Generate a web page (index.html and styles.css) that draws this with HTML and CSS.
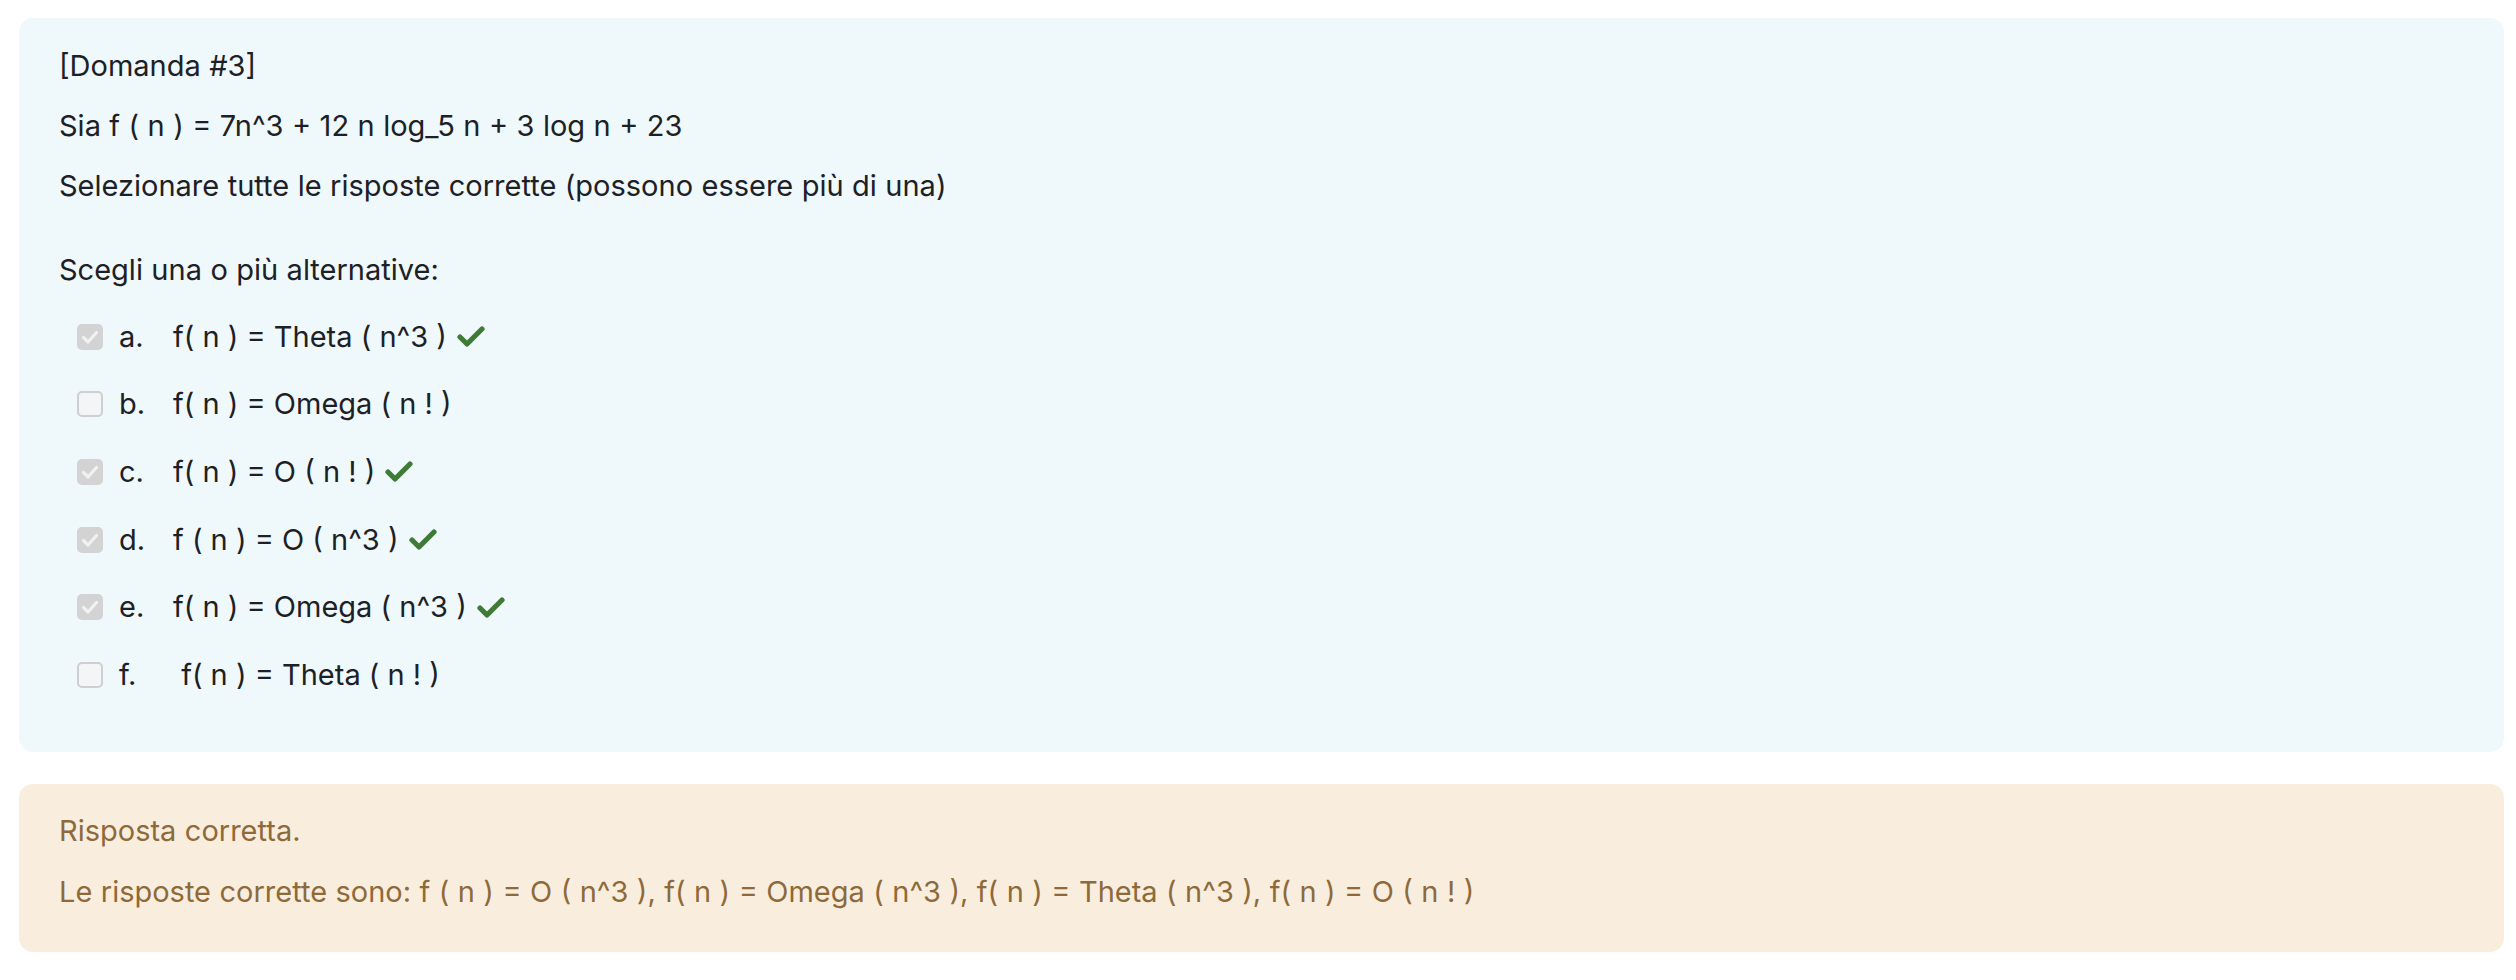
FILE: index.html
```html
<!DOCTYPE html>
<html lang="it">
<head>
<meta charset="utf-8">
<title>Domanda 3</title>
<link rel="stylesheet" href="styles.css">
</head>
<body>
<div class="page">
  <div class="formulation">
    <p class="line">[Domanda #3]</p>
    <p class="line">Sia f ( n ) = 7n^3 + 12 n log_5 n + 3 log n + 23</p>
    <p class="line">Selezionare tutte le risposte corrette (possono essere più di una)</p>
    <p class="line prompt">Scegli una o più alternative:</p>
    <div class="answers">
      <div class="opt">
        <span class="cb checked"><svg viewBox="0 0 26 26"><path d="M6.5 13.5l4.5 4.5 8.5-9.5" fill="none" stroke="#f1f1f1" stroke-width="3.2" stroke-linecap="round" stroke-linejoin="round"/></svg></span>
        <span class="num">a.</span>
        <span class="txt">f( n ) = Theta ( n^3 )</span>
        <svg class="ok" viewBox="0 0 28 21"><path d="M3 11l7 7L25 3" fill="none" stroke="#3f7b37" stroke-width="5.2" stroke-linecap="round" stroke-linejoin="round"/></svg>
      </div>
      <div class="opt">
        <span class="cb"></span>
        <span class="num">b.</span>
        <span class="txt">f( n ) = Omega ( n ! )</span>
      </div>
      <div class="opt">
        <span class="cb checked"><svg viewBox="0 0 26 26"><path d="M6.5 13.5l4.5 4.5 8.5-9.5" fill="none" stroke="#f1f1f1" stroke-width="3.2" stroke-linecap="round" stroke-linejoin="round"/></svg></span>
        <span class="num">c.</span>
        <span class="txt">f( n ) = O ( n ! )</span>
        <svg class="ok" viewBox="0 0 28 21"><path d="M3 11l7 7L25 3" fill="none" stroke="#3f7b37" stroke-width="5.2" stroke-linecap="round" stroke-linejoin="round"/></svg>
      </div>
      <div class="opt">
        <span class="cb checked"><svg viewBox="0 0 26 26"><path d="M6.5 13.5l4.5 4.5 8.5-9.5" fill="none" stroke="#f1f1f1" stroke-width="3.2" stroke-linecap="round" stroke-linejoin="round"/></svg></span>
        <span class="num">d.</span>
        <span class="txt">f ( n ) = O ( n^3 )</span>
        <svg class="ok" viewBox="0 0 28 21"><path d="M3 11l7 7L25 3" fill="none" stroke="#3f7b37" stroke-width="5.2" stroke-linecap="round" stroke-linejoin="round"/></svg>
      </div>
      <div class="opt">
        <span class="cb checked"><svg viewBox="0 0 26 26"><path d="M6.5 13.5l4.5 4.5 8.5-9.5" fill="none" stroke="#f1f1f1" stroke-width="3.2" stroke-linecap="round" stroke-linejoin="round"/></svg></span>
        <span class="num">e.</span>
        <span class="txt">f( n ) = Omega ( n^3 )</span>
        <svg class="ok" viewBox="0 0 28 21"><path d="M3 11l7 7L25 3" fill="none" stroke="#3f7b37" stroke-width="5.2" stroke-linecap="round" stroke-linejoin="round"/></svg>
      </div>
      <div class="opt">
        <span class="cb"></span>
        <span class="num">f.</span>
        <span class="txt">&nbsp;f( n ) = Theta ( n ! )</span>
      </div>
    </div>
  </div>
  <div class="outcome">
    <p class="line">Risposta corretta.</p>
    <p class="line">Le risposte corrette sono: f ( n ) = O ( n^3 ), f( n ) = Omega ( n^3 ), f( n ) = Theta ( n^3 ), f( n ) = O ( n ! )</p>
  </div>
</div>
</body>
</html>
```

FILE: styles.css
```css
html, body {
  margin: 0;
  padding: 0;
  background: #ffffff;
}
body {
  font-family: Inter, "Noto Sans", "Liberation Sans", sans-serif;
  font-size: 29px;
  color: #1d2125;
}
.page {
  display: flex;
  flex-direction: column;
  gap: 32px;
  padding: 18px 12px 0 19px;
}
.line {
  margin: 0;
  line-height: 60px;
  white-space: nowrap;
  word-spacing: 0.3px;
}
.formulation {
  background: #eff8fb;
  border-radius: 14px;
  padding: 18px 40px 43px;
}
.prompt {
  margin-top: 24px;
}
.answers {
  display: flex;
  flex-direction: column;
  padding: 3px 0 0 18px;
}
.opt {
  height: 67.6px;
  display: flex;
  align-items: center;
  line-height: 60px;
}
.cb {
  width: 26px;
  height: 26px;
  box-sizing: border-box;
  border-radius: 5px;
  border: 2px solid #cdcfd1;
  background: #f4f5f6;
  display: flex;
  margin-right: 16px;
}
.cb.checked {
  border-color: #d3d3d3;
  background: #d3d3d3;
}
.cb svg {
  width: 26px;
  height: 26px;
  margin: -2px;
}
.num {
  width: 54px;
}
.ok {
  width: 28px;
  height: 21px;
  margin-left: 10px;
}
.outcome {
  background: #f9eede;
  color: #8e6a3a;
  border-radius: 14px;
  padding: 17px 40px 30px;
}
.outcome .line + .line {
  margin-top: 1px;
}
```
